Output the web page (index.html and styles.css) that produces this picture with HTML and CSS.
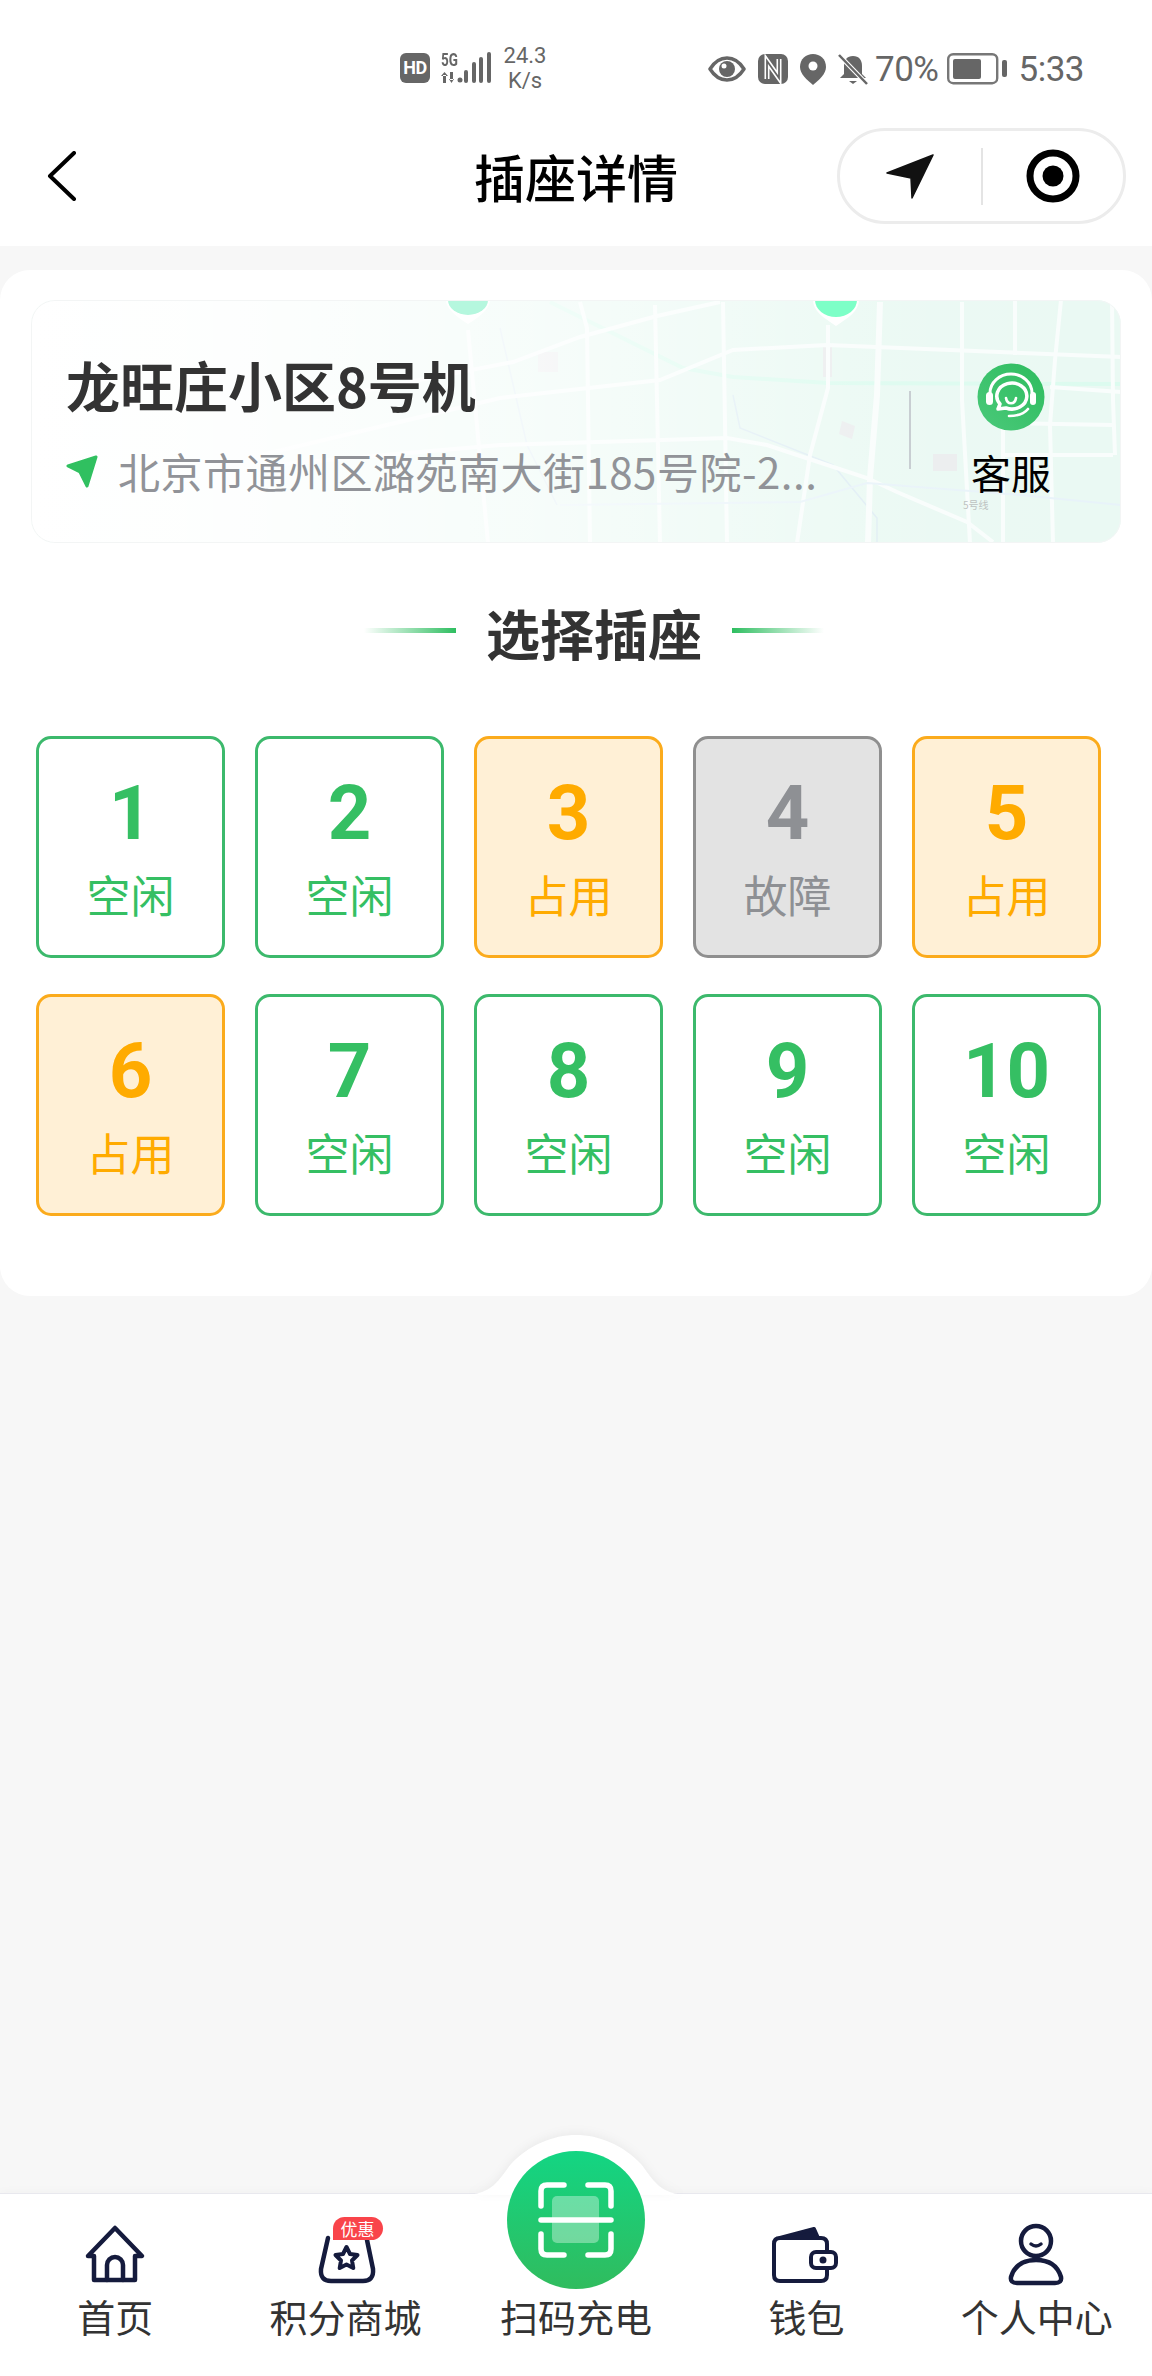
FILE: index.html
```html
<!DOCTYPE html>
<html>
<head>
<meta charset="utf-8">
<title>插座详情</title>
<link rel="stylesheet" href="styles.css">
</head>
<body>
<div class="page">

<div class="statusbar">
    <span class="hd-tag">HD</span>
    <div class="signal">
        <span class="signal-5g">5G</span>
        <svg class="signal-bars" width="50" height="32" viewBox="0 0 50 32" fill="#666">
            <path d="M2 23v8h3v-8zM0 24l3.500-4 3.500 4zM9 20v8h3v-8zM8 27h5l-2.500 4z"/>
            <circle cx="19" cy="28" r="2.500"/>
            <rect x="23" y="18" width="4" height="13" rx="2"/>
            <rect x="31" y="10" width="4" height="21" rx="2"/>
            <rect x="38" y="5" width="4" height="26" rx="2"/>
            <rect x="46" y="0" width="4" height="31" rx="2"/>
        </svg>
    </div>
    <div class="speed">
        <span>24.3</span>
        <span>K/s</span>
    </div>
    <div class="status-right">
        <svg class="st-eye" width="38" height="26" viewBox="0 0 38 26">
            <path d="M2 13C7 5 13 2 19 2s12 3 17 11c-5 8-11 11-17 11S7 21 2 13z" fill="none" stroke="#666" stroke-width="3.5" stroke-linejoin="round"/>
            <circle cx="19" cy="13" r="8" fill="#666"/>
            <circle cx="16" cy="10" r="2.5" fill="#fff"/>
        </svg>
        <svg class="st-nfc" width="30" height="30" viewBox="0 0 30 30">
            <rect width="30" height="30" rx="7" fill="#666"/>
            <path d="M9 25V7l12 17V5" fill="none" stroke="#fff" stroke-width="5"/>
            <path d="M9 25V7l12 17V5" fill="none" stroke="#666" stroke-width="1.800"/>
        </svg>
        <svg class="st-pin" width="26" height="31" viewBox="0 0 26 31">
            <path d="M13 0C6 0 0 5 0 13c0 7 7 13 13 18 6-5 13-11 13-18C26 5 20 0 13 0z" fill="#666"/>
            <circle cx="13" cy="12" r="4.5" fill="#fff"/>
        </svg>
        <svg class="st-bell" width="30" height="31" viewBox="0 0 30 31">
            <path d="M15 2c-6 0-9 4-9 10v8l-4 4h26l-4-4v-8c0-6-3-10-9-10z" fill="#666"/>
            <path d="M11 27h8l-4 3z" fill="#666"/>
            <path d="M1 1l28 29" stroke="#fff" stroke-width="4.500"/>
            <path d="M1 1l28 29" stroke="#666" stroke-width="2.500"/>
        </svg>
        <span class="st-battery-text">70%</span>
        <svg class="st-battery" width="61" height="32" viewBox="0 0 61 32">
            <rect x="1.2" y="1.2" width="49" height="29" rx="5" fill="none" stroke="#777" stroke-width="2.4"/>
            <rect x="6" y="6" width="28" height="20" rx="2" fill="#666"/>
            <rect x="55" y="7" width="5" height="17" rx="2" fill="#666"/>
        </svg>
        <span class="st-time">5:33</span>
    </div>
</div>

<header class="navbar">
    <div class="nav-left">
        <svg width="30" height="50" viewBox="0 0 30 50">
            <path d="M27 2L3 25l24 23" fill="none" stroke="#000" stroke-width="4" stroke-linecap="round" stroke-linejoin="round"/>
        </svg>
    </div>
    <h1 class="nav-title">插座详情</h1>
    <div class="nav-right">
        <div class="capsule">
            <div class="capsule-btn">
                <svg width="48" height="45" viewBox="0 0 48 45">
                    <path d="M47 1L1 19l24 5 1 20z" fill="#111" stroke="#111" stroke-width="1.5" stroke-linejoin="round"/>
                </svg>
            </div>
            <div class="capsule-line"></div>
            <div class="capsule-btn">
                <svg width="54" height="54" viewBox="0 0 54 54">
                    <circle cx="27" cy="27" r="23" fill="none" stroke="#000" stroke-width="7"/>
                    <circle cx="27" cy="27" r="10.5" fill="#000"/>
                </svg>
            </div>
        </div>
    </div>
</header>

<main class="main">
    <section class="panel">
        <div class="station">
            <svg class="station-map" width="1090" height="243" viewBox="0 0 1090 243">
                <defs>
                    <linearGradient id="mapFade" x1="0" y1="0" x2="1" y2="0">
                        <stop offset="0" stop-color="#fff" stop-opacity="1"/>
                        <stop offset="0.2" stop-color="#fff" stop-opacity="0.9"/>
                        <stop offset="0.5" stop-color="#fff" stop-opacity="0.55"/>
                        <stop offset="0.8" stop-color="#fff" stop-opacity="0.08"/>
                        <stop offset="1" stop-color="#fff" stop-opacity="0"/>
                    </linearGradient>
                </defs>
                <rect width="1090" height="243" fill="#eaf9f3"/>
                <path d="M519 2L652 68l50 9 95 6 293 1" fill="none" stroke="#dcfbef" stroke-width="4"/>
                <path d="M702 95l7 33 93 37 44 53v25M469 28l27 117 30 60" fill="none" stroke="#dfedf4" stroke-width="1.5"/>
                <g fill="#ebedee">
                    <rect x="507" y="52" width="20" height="20"/>
                    <rect x="792" y="45" width="9" height="32"/>
                    <rect x="902" y="154" width="24" height="17"/>
                    <path d="M811 121l13 5-3 13-13-5z"/>
                </g>
                <g fill="none" stroke="#f9fdfc" stroke-width="4">
                    <path d="M230 155L469 98l160-18 73-30 94-5 294 12"/>
                    <path d="M260 105L482 62l67-25 77-21 63-14"/>
                    <path d="M240 165l229-20 227-7 40 7 100 33 30 14 70 30 26 20"/>
                    <path d="M437 30l20 213M549 2l7 26 3 215M624 5l5 238M692 2l4 241M797 25v63l-18 67-13 88"/>
                    <path d="M931 2v98l8 143M984 0v55M972 123v120M1030 0l-6 60-5 65 3 118M1081 0l1 100 2 55"/>
                    <path d="M1019 87l71 5M972 123l110 2M972 155h110"/>
                </g>
                <path d="M849 2l-3 93-7 83-2 65" fill="none" stroke="#f9fdfc" stroke-width="6"/>
                <path d="M529 205l240-3 67-19 153 12 101 10" fill="none" stroke="#e8f3f9" stroke-width="2"/>
                <text x="932" y="209" class="map-label">5号线</text>
                <rect width="1090" height="243" fill="url(#mapFade)"/>
                <path d="M415 0c0 8 9 16 22 24 13-8 22-16 22-24z" fill="#fff"/>
                <path d="M417 0a20 15 0 0 0 40 0z" fill="#b5f7de"/>
                <path d="M782 0c0 11 11 18 23 26 12-8 23-15 23-26z" fill="#fff"/>
                <path d="M784 0a21 17 0 0 0 42 0z" fill="#7dffc7"/>
            </svg>
            <div class="station-info">
                <div class="station-name">龙旺庄小区8号机</div>
                <div class="station-addr">
                    <svg width="32" height="33" viewBox="0 0 32 33">
                        <path d="M30 2L2 11l12 6 7 14z" fill="#30c060" stroke="#30c060" stroke-width="3" stroke-linejoin="round"/>
                    </svg>
                    <span>北京市通州区潞苑南大街185号院-2...</span>
                </div>
            </div>
            <div class="station-line"></div>
            <div class="station-service">
                <svg width="68" height="68" viewBox="0 0 68 68">
                    <defs>
                        <linearGradient id="kfBg" x1="0" y1="1" x2="1" y2="0">
                            <stop offset="0" stop-color="#4bc97a"/>
                            <stop offset="1" stop-color="#2dbc5e"/>
                        </linearGradient>
                    </defs>
                    <circle cx="34" cy="34" r="33.5" fill="url(#kfBg)"/>
                    <path d="M13 30a21 19 0 0 1 42 0" fill="none" stroke="#fff" stroke-width="3"/>
                    <rect x="9" y="29" width="7" height="13" rx="3.5" fill="#fff"/>
                    <rect x="53" y="29" width="6" height="13" rx="3" fill="#fff"/>
                    <path d="M21 46l2-5a15 13 0 1 1 6 4z" fill="none" stroke="#fff" stroke-width="3.5" stroke-linejoin="round"/>
                    <path d="M29 35c1 7 9 7 10 0" fill="none" stroke="#fff" stroke-width="2.6" stroke-linecap="round"/>
                    <path d="M32 53c8 0 15-2 19-7" fill="none" stroke="#fff" stroke-width="2.6" stroke-linecap="round"/>
                </svg>
                <span>客服</span>
            </div>
        </div>

        <div class="socket-area">
            <div class="socket-head">
                <i class="head-line head-line-l"></i>
                <h2>选择插座</h2>
                <i class="head-line head-line-r"></i>
            </div>
            <div class="socket-grid">
                <div class="socket free"><b>1</b><span>空闲</span></div>
                <div class="socket free"><b>2</b><span>空闲</span></div>
                <div class="socket busy"><b>3</b><span>占用</span></div>
                <div class="socket fault"><b>4</b><span>故障</span></div>
                <div class="socket busy"><b>5</b><span>占用</span></div>
                <div class="socket busy"><b>6</b><span>占用</span></div>
                <div class="socket free"><b>7</b><span>空闲</span></div>
                <div class="socket free"><b>8</b><span>空闲</span></div>
                <div class="socket free"><b>9</b><span>空闲</span></div>
                <div class="socket free"><b>10</b><span>空闲</span></div>
            </div>
        </div>
    </section>
</main>

<footer class="tabbar">
    <div class="tab">
        <svg width="70" height="70" viewBox="0 0 70 70" fill="none" stroke="#151b3d" stroke-width="4.5" stroke-linecap="round" stroke-linejoin="round">
            <path d="M14 36H8L35 8l27 28h-7v24H14z"/>
            <path d="M27 60V45a8 8 0 0 1 16 0v15"/>
        </svg>
        <span>首页</span>
    </div>
    <div class="tab">
        <div class="tab-icon">
            <svg width="70" height="70" viewBox="0 0 70 70" fill="none" stroke="#151b3d" stroke-width="4.5" stroke-linecap="round" stroke-linejoin="round">
                <path d="M17 18l-7 31q-1 12 10 12h32q11 0 10-12l-6-29"/>
                <path d="M35.500 27l3.500 7 7.500 1-5.500 5.500 1.300 7.500-6.800-3.500-6.800 3.500 1.300-7.500-5.500-5.500 7.500-1z" stroke-width="4"/>
            </svg>
            <em class="tab-badge">优惠</em>
        </div>
        <span>积分商城</span>
    </div>
    <div class="tab tab-scan">
        <svg class="scan-bump" width="226" height="62" viewBox="0 0 226 62">
            <path d="M0 61c30 0 36-16 48-31C66 11 90 1 113 1s47 10 65 29c12 15 18 31 48 31z" fill="#fff"/>
        </svg>
        <svg class="scan-btn" width="138" height="138" viewBox="0 0 138 138">
            <defs>
                <linearGradient id="scanBg" x1="0" y1="0" x2="0" y2="1">
                    <stop offset="0" stop-color="#13d583"/>
                    <stop offset="1" stop-color="#30bc5e"/>
                </linearGradient>
            </defs>
            <circle cx="69" cy="69" r="69" fill="url(#scanBg)"/>
            <rect x="45" y="45" width="47" height="47" rx="5" fill="#fff" fill-opacity="0.35"/>
            <g fill="none" stroke="#fff" stroke-width="5.500" stroke-linecap="round" stroke-linejoin="round">
                <path d="M34 55V40q0-6 6-6h17M81 34h17q6 0 6 6v15M34 83v15q0 6 6 6h17M81 104h17q6 0 6-6V83"/>
                <path d="M34 69h70"/>
            </g>
        </svg>
        <span>扫码充电</span>
    </div>
    <div class="tab">
        <svg width="70" height="70" viewBox="0 0 70 70" fill="none" stroke="#151b3d" stroke-width="4" stroke-linecap="round" stroke-linejoin="round">
            <path d="M56 32V24q0-6-6-6H9q-6 0-6 6v31q0 6 6 6h41q6 0 6-6v-7"/>
            <path d="M9 18L43 9l4 9z" fill="#151b3d"/>
            <rect x="40" y="32" width="25" height="16" rx="5" fill="#fff"/>
            <circle cx="52" cy="40" r="1.500" fill="#151b3d"/>
        </svg>
        <span>钱包</span>
    </div>
    <div class="tab">
        <svg width="70" height="70" viewBox="0 0 70 70" fill="none" stroke="#151b3d" stroke-width="4.500" stroke-linecap="round" stroke-linejoin="round">
            <circle cx="34" cy="21" r="15"/>
            <path d="M15 63q-7 0-6-6 5-17 25-17t25 17q1 6-6 6z"/>
            <path d="M29 24q5 4 10 0" stroke-width="3.500"/>
        </svg>
        <span>个人中心</span>
    </div>
</footer>

</div>
</body>
</html>
```
FILE: styles.css
```css
body {
    margin: 0;
    font-family: "Noto Sans CJK SC", "Noto Sans", sans-serif;
    background-color: #f7f7f7;
}
.page {
    width: 1152px;
    height: 2376px;
    display: flex;
    flex-direction: column;
    overflow: hidden;
}

/* status bar */
.statusbar {
    height: 108px;
    flex: none;
    background-color: #fff;
    display: flex;
    align-items: flex-start;
    padding: 46px 68px 0 400px;
    box-sizing: border-box;
    font-family: Roboto, sans-serif;
    color: #666;
}
.hd-tag {
    width: 30px;
    height: 30px;
    margin-top: 7px;
    border-radius: 6px;
    background-color: #666;
    color: #fff;
    font-size: 18px;
    font-weight: 700;
    line-height: 30px;
    text-align: center;
    letter-spacing: -0.5px;
}
.signal {
    position: relative;
    width: 50px;
    height: 32px;
    margin: 6px 0 0 11px;
}
.signal-5g {
    position: absolute;
    left: 0;
    top: 0;
    font-size: 18px;
    font-weight: 700;
    line-height: 15px;
    transform: scaleX(0.75);
    transform-origin: left center;
}
.signal-bars {
    display: block;
}
.speed {
    width: 62px;
    margin: -3px 0 0 3px;
    display: flex;
    flex-direction: column;
    align-items: center;
    font-size: 22px;
    line-height: 25px;
}
.status-right {
    margin-left: auto;
    display: flex;
    align-items: center;
    height: 44px;
    margin-top: 1px;
}
.st-nfc { margin-left: 12px; }
.st-pin { margin-left: 12px; }
.st-bell { margin-left: 12px; }
.st-battery-text {
    margin-left: 7px;
    font-size: 35px;
    letter-spacing: -0.5px;
}
.st-battery { margin-left: 8px; }
.st-time {
    margin-left: 11px;
    font-size: 35px;
    letter-spacing: -0.5px;
}

/* nav */
.navbar {
    height: 138px;
    flex: none;
    background-color: #fff;
    display: grid;
    grid-template-columns: 1fr auto 1fr;
    align-items: center;
    padding-bottom: 2px;
    box-sizing: border-box;
}
.nav-left {
    padding-left: 47px;
    display: flex;
}
.nav-title {
    margin: 0;
    font-size: 51px;
    font-weight: 500;
    line-height: 70px;
    color: #000;
}
.nav-right {
    display: flex;
    justify-content: flex-end;
    padding-right: 26px;
}
.capsule {
    width: 289px;
    height: 96px;
    box-sizing: border-box;
    border: 3px solid #ececec;
    border-radius: 48px;
    display: flex;
    align-items: center;
}
.capsule-btn {
    flex: 1;
    display: flex;
    justify-content: center;
}
.capsule-line {
    width: 2px;
    height: 57px;
    background-color: #e4e4e4;
}

/* panel */
.main {
    flex: 1;
    padding-top: 24px;
}
.panel {
    background-color: #fff;
    border-radius: 30px;
    padding: 30px 0 80px 0;
}
.station {
    position: relative;
    height: 243px;
    margin: 0 31px;
    border-radius: 24px;
    overflow: hidden;
    display: flex;
}
.station::after {
    content: "";
    position: absolute;
    inset: 0;
    border: 1px solid #f3f5f5;
    border-radius: 24px;
}
.station-map {
    position: absolute;
    left: 0;
    top: 0;
}
.map-label {
    font-size: 10px;
    fill: #b9bebd;
}
.station-info {
    position: relative;
    flex: 1;
    padding: 50px 0 0 35px;
}
.station-name {
    font-size: 54px;
    font-weight: 700;
    line-height: 70px;
    color: #333;
}
.station-addr {
    margin-top: 26px;
    display: flex;
    align-items: center;
    font-size: 42px;
    line-height: 50px;
    letter-spacing: 0.5px;
    color: #919398;
}
.station-addr svg {
    margin-right: 20px;
}
.station-line {
    position: relative;
    width: 2px;
    height: 78px;
    margin: 91px 40px 0 0;
    background-color: #c8ced2;
}
.station-service {
    position: relative;
    width: 120px;
    margin-right: 50px;
    padding-top: 63px;
    display: flex;
    flex-direction: column;
    align-items: center;
    font-size: 40px;
    line-height: 50px;
    color: #000;
}
.station-service span {
    margin-top: 16px;
}

/* sockets */
.socket-area {
    padding-left: 36px;
}
.socket-head {
    margin-top: 55px;
    height: 70px;
    display: flex;
    justify-content: center;
    align-items: center;
}
.socket-head h2 {
    margin: 0 30px;
    font-size: 54px;
    font-weight: 700;
    line-height: 70px;
    color: #333;
}
.head-line {
    width: 92px;
    height: 5px;
    margin-top: -5px;
}
.head-line-l {
    background: linear-gradient(to right, rgba(46, 190, 96, 0), #2ebe60);
}
.head-line-r {
    background: linear-gradient(to right, #2ebe60, rgba(46, 190, 96, 0));
}
.socket-grid {
    margin-top: 68px;
    display: grid;
    grid-template-columns: repeat(5, 189px);
    gap: 36px 30px;
}
.socket {
    height: 222px;
    box-sizing: border-box;
    border: 3px solid #3cb96c;
    border-radius: 15px;
    padding-top: 36px;
    display: flex;
    flex-direction: column;
    align-items: center;
}
.socket b {
    font-family: Roboto, sans-serif;
    font-size: 76px;
    font-weight: 700;
    line-height: 76px;
}
.socket span {
    margin-top: 18px;
    font-size: 44px;
    line-height: 50px;
}
.socket.free { color: #35bf63; background-color: #fff; }
.socket.busy { color: #ffab00; background-color: #fff0d6; border-color: #fbab1c; }
.socket.fault { color: #8e9094; background-color: #e3e3e3; border-color: #8f8f8f; }

/* tabbar */
.tabbar {
    position: relative;
    height: 183px;
    flex: none;
    background-color: #fff;
    border-top: 1px solid #e8e8ee;
    box-shadow: 0 -3px 8px rgba(0, 0, 0, 0.02);
    box-sizing: border-box;
    display: grid;
    grid-template-columns: repeat(5, 1fr);
}
.tab {
    position: relative;
    padding-top: 26px;
    display: flex;
    flex-direction: column;
    align-items: center;
    font-size: 38px;
    line-height: 50px;
    color: #333;
}
.tab > span {
    margin-top: 1px;
}
.tab-icon {
    position: relative;
    width: 70px;
    height: 70px;
}
.tab-icon svg {
    display: block;
}
.tab-badge {
    position: absolute;
    left: 22px;
    top: -3px;
    width: 50px;
    height: 23px;
    border-radius: 12px 12px 12px 0;
    background-color: #f9444a;
    color: #fff;
    font-style: normal;
    font-size: 17px;
    line-height: 23px;
    text-align: center;
}
.tab-scan {
    padding-top: 96px;
}
.scan-bump {
    position: absolute;
    left: 2px;
    top: -60px;
    filter: drop-shadow(0 -2px 5px rgba(0, 0, 0, 0.05));
}
.scan-btn {
    position: absolute;
    left: 46px;
    top: -43px;
}
```
